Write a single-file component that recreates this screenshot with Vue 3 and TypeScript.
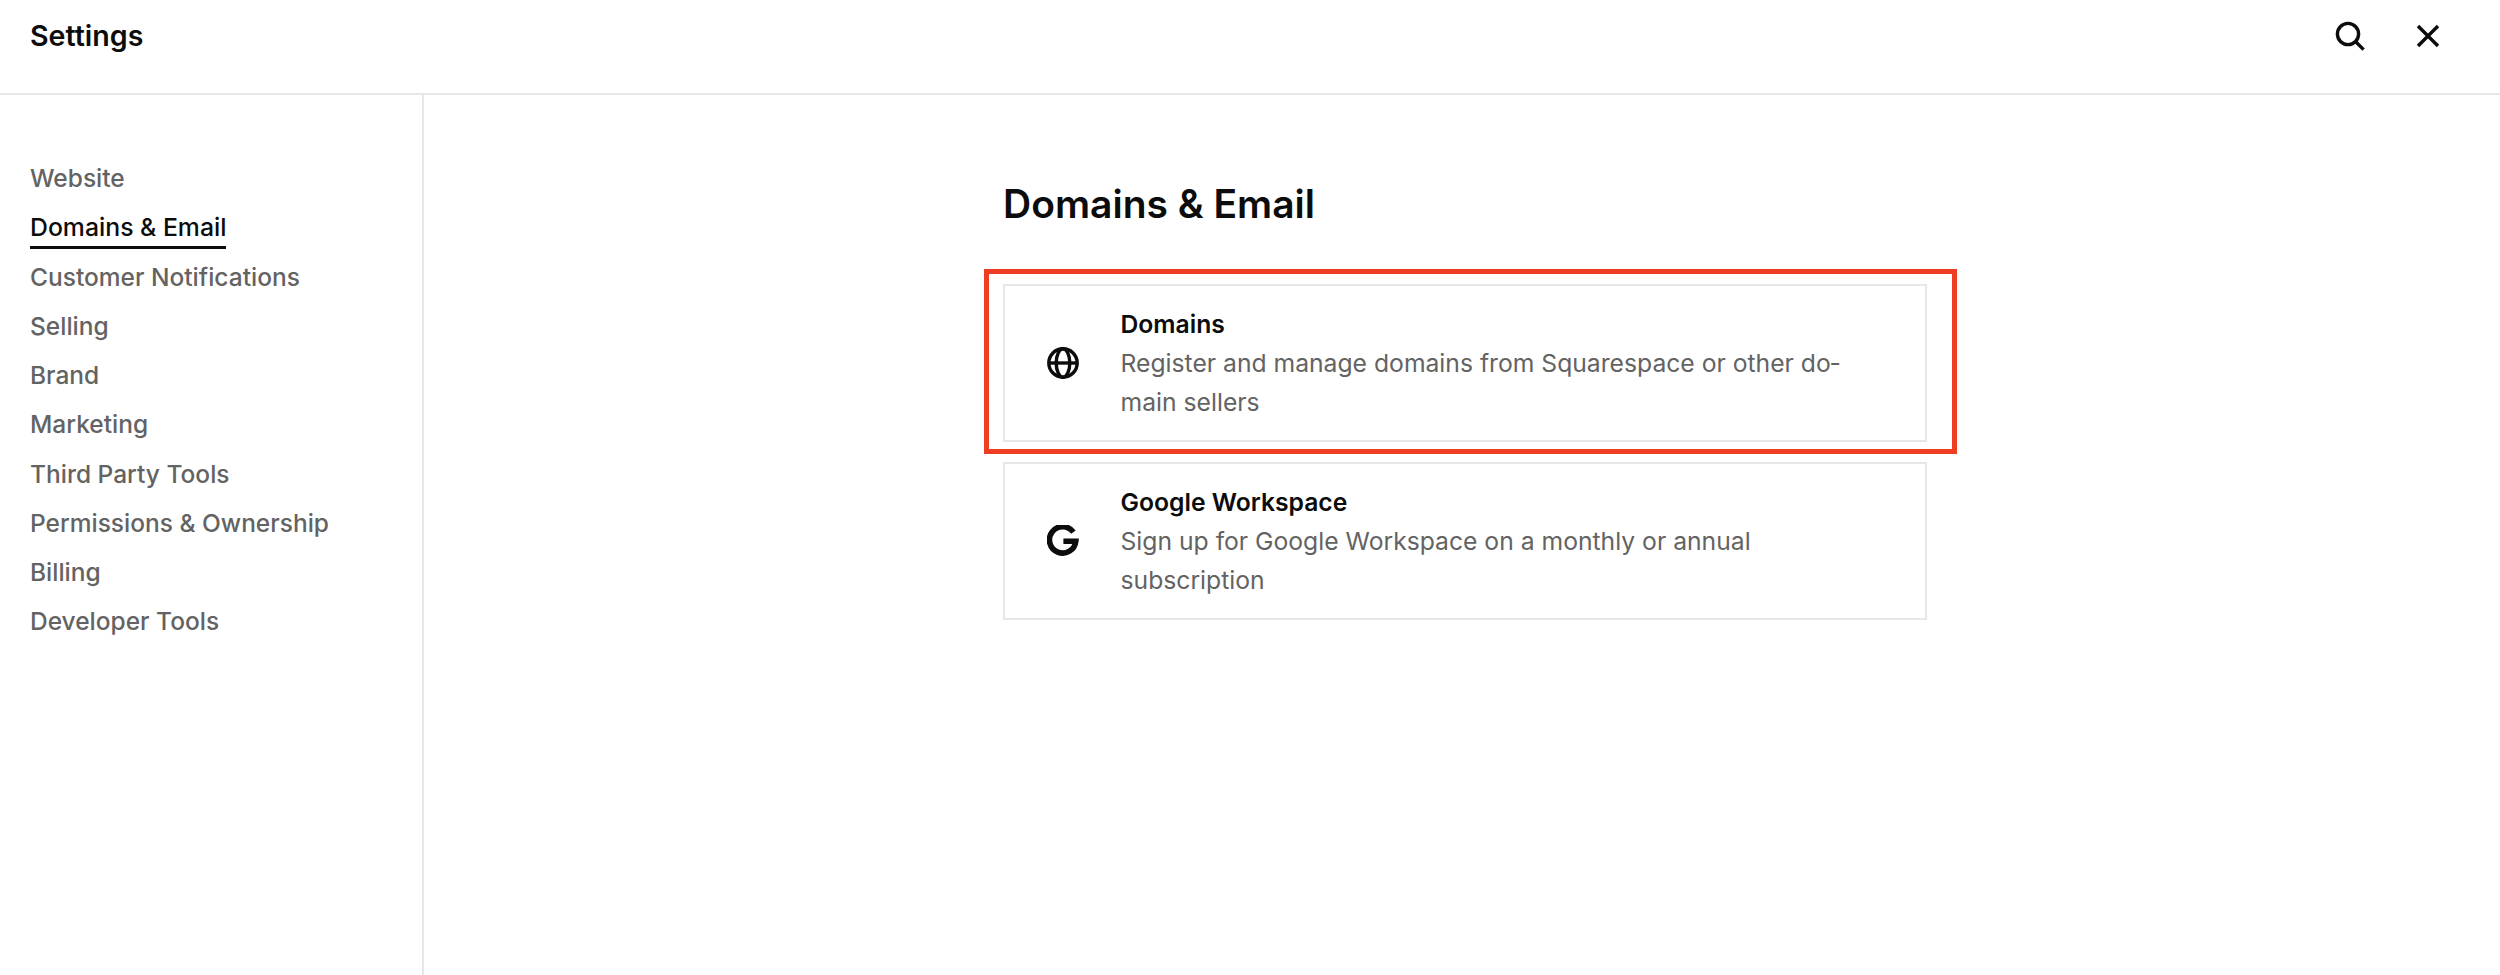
<template>
  <div class="page">
    <header class="topbar">
      <div class="title">Settings</div>
      <div class="actions">
        <svg class="icon" viewBox="0 0 32 32" width="32" height="32" fill="none" stroke="#0c0c0c" stroke-width="3.4">
          <circle cx="14" cy="14" r="10.6" />
          <path d="M22 22l7.6 7.6" />
        </svg>
        <svg class="icon" viewBox="0 0 32 32" width="32" height="32" fill="none" stroke="#0c0c0c" stroke-width="3.4">
          <path d="M6 6l20 20M26 6L6 26" />
        </svg>
      </div>
    </header>
    <div class="body">
      <nav class="sidebar">
        <a v-for="item in navItems" :key="item" class="nav-item" :class="{ active: item === activeItem }">
          <span>{{ item }}</span>
        </a>
      </nav>
      <main class="content">
        <h1>Domains &amp; Email</h1>
        <div class="cards">
          <div class="card">
            <svg class="card-icon" viewBox="0 0 32 32" width="32" height="32" fill="none" stroke="#0c0c0c" stroke-width="3.4">
              <circle cx="16" cy="16" r="14.2" />
              <ellipse cx="16" cy="16" rx="6.8" ry="14.2" />
              <path d="M2 16h28" />
            </svg>
            <div class="card-text">
              <div class="card-title">Domains</div>
              <div class="card-desc">Register and manage domains from Squarespace or other do&shy;main sellers</div>
            </div>
            <div class="highlight"></div>
          </div>
          <div class="card">
            <svg class="card-icon" viewBox="0 0 32 32" width="32" height="32" fill="none" stroke="#0c0c0c" stroke-width="5.6">
              <path d="M26.4 7.2A13.2 13.2 0 1 0 28.8 16.2H16.4" />
            </svg>
            <div class="card-text">
              <div class="card-title">Google Workspace</div>
              <div class="card-desc">Sign up for Google Workspace on a monthly or annual subscription</div>
            </div>
          </div>
        </div>
      </main>
    </div>
  </div>
</template>

<script setup lang="ts">
const activeItem = 'Domains & Email';

const navItems: string[] = [
  'Website',
  'Domains & Email',
  'Customer Notifications',
  'Selling',
  'Brand',
  'Marketing',
  'Third Party Tools',
  'Permissions & Ownership',
  'Billing',
  'Developer Tools',
];
</script>

<style scoped>
.page {
  display: flex;
  flex-direction: column;
  height: 975px;
  background: #fff;
  font-family: Inter, 'Liberation Sans', sans-serif;
  color: #0c0c0c;
}
.topbar {
  display: flex;
  justify-content: space-between;
  height: 93px;
  border-bottom: 2px solid #e7e7e7;
  padding: 0 56px 0 30px;
}
.title {
  font-size: 28.6px;
  font-weight: 600;
  line-height: 36px;
  margin-top: 18px;
}
.actions {
  display: flex;
  gap: 46px;
  padding-top: 20px;
}
.body {
  display: flex;
  flex: 1;
}
.sidebar {
  width: 392px;
  padding: 67px 0 0 30px;
  border-right: 2px solid #e7e7e7;
  display: flex;
  flex-direction: column;
  align-items: flex-start;
}
.nav-item {
  display: block;
  height: 49.25px;
  font-size: 24.5px;
  font-weight: 500;
  line-height: 32px;
  color: #636363;
}
.nav-item span {
  display: block;
  padding-bottom: 3px;
}
.nav-item.active {
  color: #0c0c0c;
  font-size: 24.8px;
}
.nav-item.active span {
  border-bottom: 3px solid #0c0c0c;
}
.content {
  width: 924px;
  margin-left: 579px;
}
h1 {
  margin: 0;
  padding-top: 86px;
  font-size: 39px;
  line-height: 46px;
  font-weight: 600;
}
.cards {
  display: flex;
  flex-direction: column;
  gap: 20px;
  margin-top: 57px;
}
.card {
  position: relative;
  display: flex;
  align-items: center;
  box-sizing: border-box;
  height: 158px;
  padding: 0 60px 0 42px;
  border: 2px solid #e7e7e7;
}
.card-icon {
  flex: none;
  margin-right: 41.5px;
}
.card-title {
  font-size: 24.7px;
  font-weight: 600;
  line-height: 39px;
}
.card-desc {
  font-size: 24.7px;
  line-height: 39px;
  color: #636363;
}
.highlight {
  position: absolute;
  left: -21px;
  top: -17px;
  width: 973px;
  height: 185px;
  box-sizing: border-box;
  border: 5px solid #ef3d23;
  pointer-events: none;
}
</style>
